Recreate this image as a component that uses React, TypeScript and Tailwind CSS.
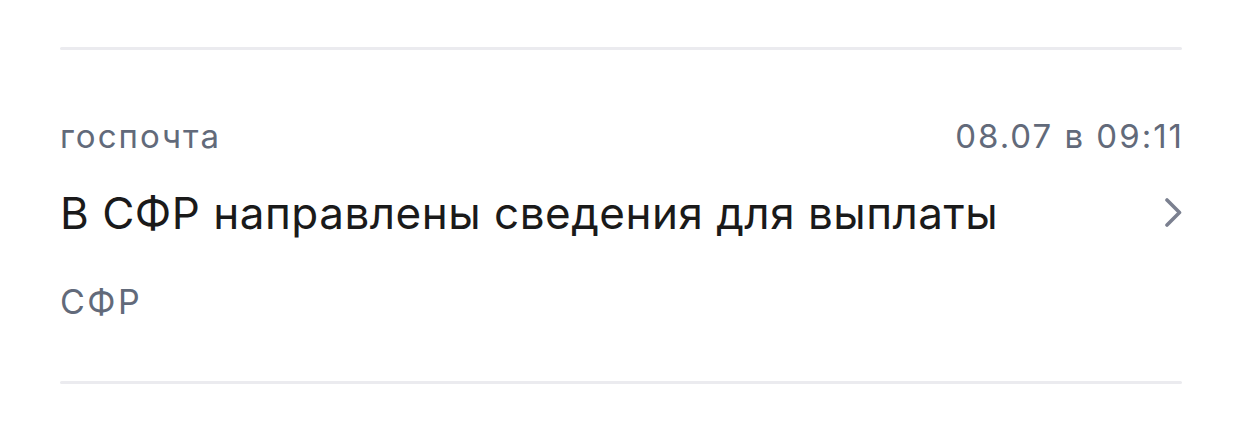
import React from 'react';

const ChevronRight = () => (
  <svg width="18" height="30" viewBox="0 0 18 30" fill="none" className="shrink-0">
    <path d="M3 2 L15.5 14.5 L3 27" stroke="#7b8090" strokeWidth="3.6" strokeLinecap="round" strokeLinejoin="round" />
  </svg>
);

const App: React.FC = () => {
  return (
    <div className="w-[1242px] h-[447px] bg-white font-['Inter','Noto_Sans',sans-serif] px-[60px] pt-[47px]">
      <div className="h-[3px] bg-[#ebebef] rounded-full"></div>

      {/* Message row */}
      <div className="pt-[68px] pb-[59px]">
        <div className="flex items-baseline justify-between text-[33px] leading-[36px] text-[#626a7a] tracking-[2px]">
          <span>госпочта</span>
          <span className="-mr-[2px]">08.07 в 09:11</span>
        </div>
        <div className="flex items-center justify-between mt-[33px]">
          <h3 className="text-[44px] leading-[52px] text-[#1a1a1a] font-normal tracking-[0.5px]">
            В СФР направлены сведения для выплаты
          </h3>
          <ChevronRight />
        </div>
        <div className="mt-[43px] text-[34px] leading-[40px] text-[#626a7a] tracking-[2.5px]">СФР</div>
      </div>

      <div className="h-[3px] bg-[#ebebef] rounded-full"></div>
    </div>
  );
};

export default App;
